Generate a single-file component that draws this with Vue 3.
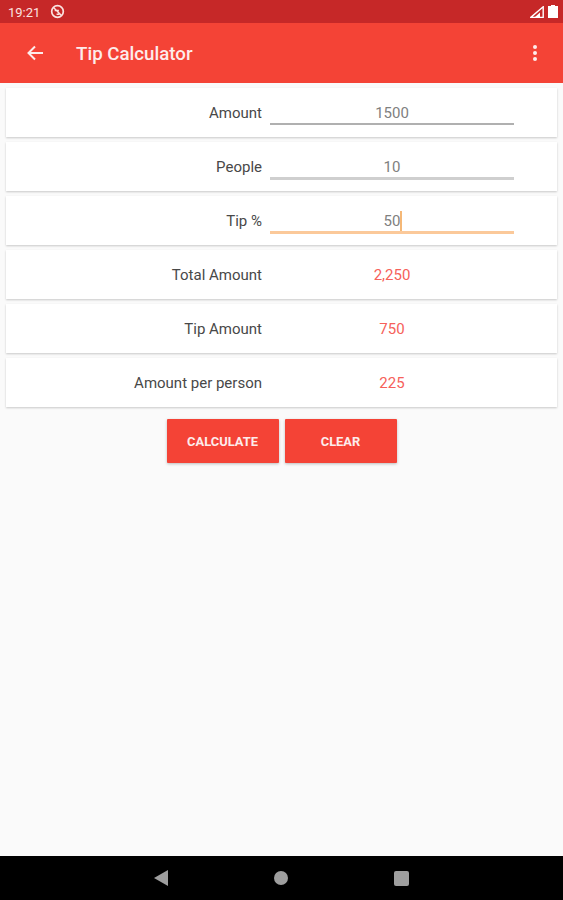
<script setup>
const rows = [
  { label: 'Amount', value: '1500', kind: 'input' },
  { label: 'People', value: '10', kind: 'input thick' },
  { label: 'Tip %', value: '50', kind: 'input focus' },
  { label: 'Total Amount', value: '2,250', kind: 'result' },
  { label: 'Tip Amount', value: '750', kind: 'result' },
  { label: 'Amount per person', value: '225', kind: 'result' },
]
</script>

<template>
  <div class="screen">
    <div class="status">
      <div class="status-left">
        <span class="time">19:21</span>
        <svg class="notif" viewBox="0 0 16 16" width="15" height="15">
          <circle cx="8" cy="8" r="6.2" fill="none" stroke="#fbe3e1" stroke-width="1.8" />
          <path d="M4 4l8 8M5 7h4.5M7 11h3" stroke="#fbe3e1" stroke-width="1.5" fill="none" />
        </svg>
      </div>
      <div class="status-right">
        <svg viewBox="0 0 14 12" width="14" height="12">
          <path d="M0.8 11.4L13.2 0.8V11.4Z" fill="none" stroke="#fff" stroke-width="1.4" />
          <path d="M5 11L10 6.5V11Z" fill="#fff" />
        </svg>
        <svg viewBox="0 0 10 13" width="10" height="13">
          <path d="M3 0h4v1h3v12H0V1h3z" fill="#fff" />
        </svg>
      </div>
    </div>
    <header class="appbar">
      <svg class="back" viewBox="0 0 18 18" width="18" height="18">
        <path d="M17 9H3M9 2.5L2.5 9L9 15.5" fill="none" stroke="#fdeceb" stroke-width="2" />
      </svg>
      <h1 class="title">Tip Calculator</h1>
      <div class="more"><i></i><i></i><i></i></div>
    </header>
    <main class="content">
      <div v-for="row in rows" :key="row.label" class="card">
        <span class="label">{{ row.label }}</span>
        <div class="field" :class="row.kind">
          <span class="value">{{ row.value }}<i v-if="row.kind.includes('focus')" class="caret"></i></span>
        </div>
      </div>
      <div class="actions">
        <button class="btn">CALCULATE</button>
        <button class="btn">CLEAR</button>
      </div>
    </main>
    <footer class="nav">
      <svg viewBox="0 0 14 16" width="14" height="16"><path d="M14 0V16L0 8Z" fill="#9e9e9e" /></svg>
      <svg viewBox="0 0 14 14" width="14" height="14"><circle cx="7" cy="7" r="7" fill="#9e9e9e" /></svg>
      <svg viewBox="0 0 15 15" width="15" height="15"><rect width="15" height="15" rx="2" fill="#9e9e9e" /></svg>
    </footer>
  </div>
</template>

<style scoped>
.screen {
  width: 563px;
  height: 900px;
  display: flex;
  flex-direction: column;
  background: #fafafa;
  font-family: Roboto, "Liberation Sans", sans-serif;
  overflow: hidden;
}
.status {
  height: 23px;
  background: #c62828;
  display: flex;
  align-items: center;
  justify-content: space-between;
  padding: 0 5px 0 8px;
  flex: none;
}
.status-left { display: flex; align-items: center; gap: 10px; }
.status-right { display: flex; align-items: center; gap: 4px; }
.time { color: #fbe3e1; font-size: 13px; padding-top: 1px; }
.appbar {
  height: 60px;
  flex: none;
  background: #f44336;
  display: flex;
  align-items: center;
  padding: 0 26px;
}
.title {
  margin: 1px 0 0 32px;
  color: #fdeceb;
  font-size: 18.7px;
  font-weight: 500;
  flex: 1;
}
.more { display: flex; flex-direction: column; gap: 2px; }
.more i { width: 4px; height: 4px; border-radius: 50%; background: #fdeceb; display: block; }
.content {
  flex: 1;
  padding: 5px 6px 0;
  display: flex;
  flex-direction: column;
  gap: 5px;
}
.card {
  height: 49px;
  background: #fff;
  box-shadow: 0 1px 2px rgba(0, 0, 0, 0.2);
  display: grid;
  grid-template-columns: 256px 244px;
  column-gap: 8px;
  align-items: center;
}
.label {
  text-align: right;
  color: #484848;
  font-size: 15px;
  padding-top: 1px;
}
.field {
  text-align: center;
  height: 49px;
  box-sizing: border-box;
  padding-top: 15px;
  font-size: 15px;
  line-height: 20px;
}
.input { color: #808080; position: relative; }
.input::after {
  content: "";
  position: absolute;
  left: 0;
  right: 0;
  top: 35px;
  height: 2px;
  background: #b0b0b0;
}
.thick::after { background: #cfcfcf; height: 3px; }
.focus::after { background: #fbc99a; height: 3px; }
.result { color: #f6615a; }
.value { position: relative; }
.caret {
  position: absolute;
  right: -2px;
  top: -1px;
  width: 2px;
  height: 20px;
  background: #f5b877;
}
.actions {
  display: flex;
  justify-content: center;
  gap: 6px;
  margin-top: 7px;
}
.btn {
  width: 112px;
  height: 44px;
  border: 0;
  border-radius: 1px;
  background: #f44336;
  color: #fdeceb;
  font-family: inherit;
  font-size: 12.9px;
  font-weight: 700;
  box-shadow: 0 1px 3px rgba(0, 0, 0, 0.25);
  padding: 0;
}
.nav {
  height: 44px;
  flex: none;
  background: #000;
  display: flex;
  align-items: center;
  justify-content: center;
  gap: 106px;
}
</style>
